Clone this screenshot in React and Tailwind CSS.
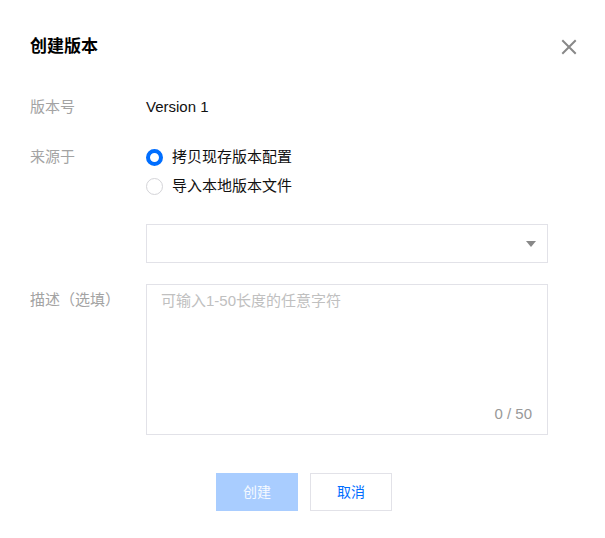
export default function App() {
  const font = { fontFamily: '"Liberation Sans", "Noto Sans CJK SC", sans-serif' };
  return (
    <div className="w-[605px] h-[538px] bg-white relative" style={font}>
      <div className="pl-[30px] pr-[28px] pt-[36px] flex items-center justify-between h-[58px]">
        <div className="text-[17px] leading-[22px] font-bold text-[#000]">创建版本</div>
        <svg width="16" height="16" viewBox="0 0 16 16">
          <path d="M2 2 L14 14 M14 2 L2 14" stroke="#888" strokeWidth="2" strokeLinecap="square" />
        </svg>
      </div>
      <div className="pl-[30px] pt-[39px] flex flex-col">
        <div className="flex items-center h-[20px] text-[15px]">
          <div className="w-[116px] text-[#a3a3a3]">版本号</div>
          <div className="text-[#111]">Version 1</div>
        </div>
        <div className="flex mt-[30px] text-[15px]">
          <div className="w-[116px] text-[#a3a3a3] leading-[20px]">来源于</div>
          <div className="flex flex-col gap-[9px]">
            <div className="flex items-center h-[20px] gap-[9px]">
              <span className="w-[17px] h-[17px] rounded-full border-[4px] border-[#006eff] bg-white box-border"></span>
              <span className="text-[#111]">拷贝现存版本配置</span>
            </div>
            <div className="flex items-center h-[20px] gap-[9px]">
              <span className="w-[17px] h-[17px] rounded-full border border-[#d4d4d8] bg-white box-border"></span>
              <span className="text-[#111]">导入本地版本文件</span>
            </div>
          </div>
        </div>
        <div className="flex mt-[28px]">
          <div className="w-[116px]"></div>
          <div className="w-[402px] h-[39px] border border-[#e2e2e8] flex items-center justify-end pr-[11px]">
            <svg width="10" height="6" viewBox="0 0 10 6">
              <path d="M0 0 L10 0 L5 6 Z" fill="#888" />
            </svg>
          </div>
        </div>
        <div className="flex mt-[21px] text-[15px]">
          <div className="w-[116px] text-[#a3a3a3] leading-[20px] pt-[6px]">描述（选填）</div>
          <div className="w-[402px] h-[151px] border border-[#e2e2e8] flex flex-col justify-between pl-[14px] pr-[15px] pt-[6px] pb-[10px]">
            <div className="text-[#c0c0c0] leading-[20px]">可输入1-50长度的任意字符</div>
            <div className="text-[#999] leading-[20px] text-right">0 / 50</div>
          </div>
        </div>
      </div>
      <div className="flex justify-center gap-[12px] mt-[38px] pl-[3px] text-[14px]">
        <div className="w-[82px] h-[38px] bg-[#a9cdff] text-white/90 flex items-center justify-center">创建</div>
        <div className="w-[82px] h-[38px] border border-[#e2e2e8] text-[#006eff] flex items-center justify-center">取消</div>
      </div>
    </div>
  );
}
